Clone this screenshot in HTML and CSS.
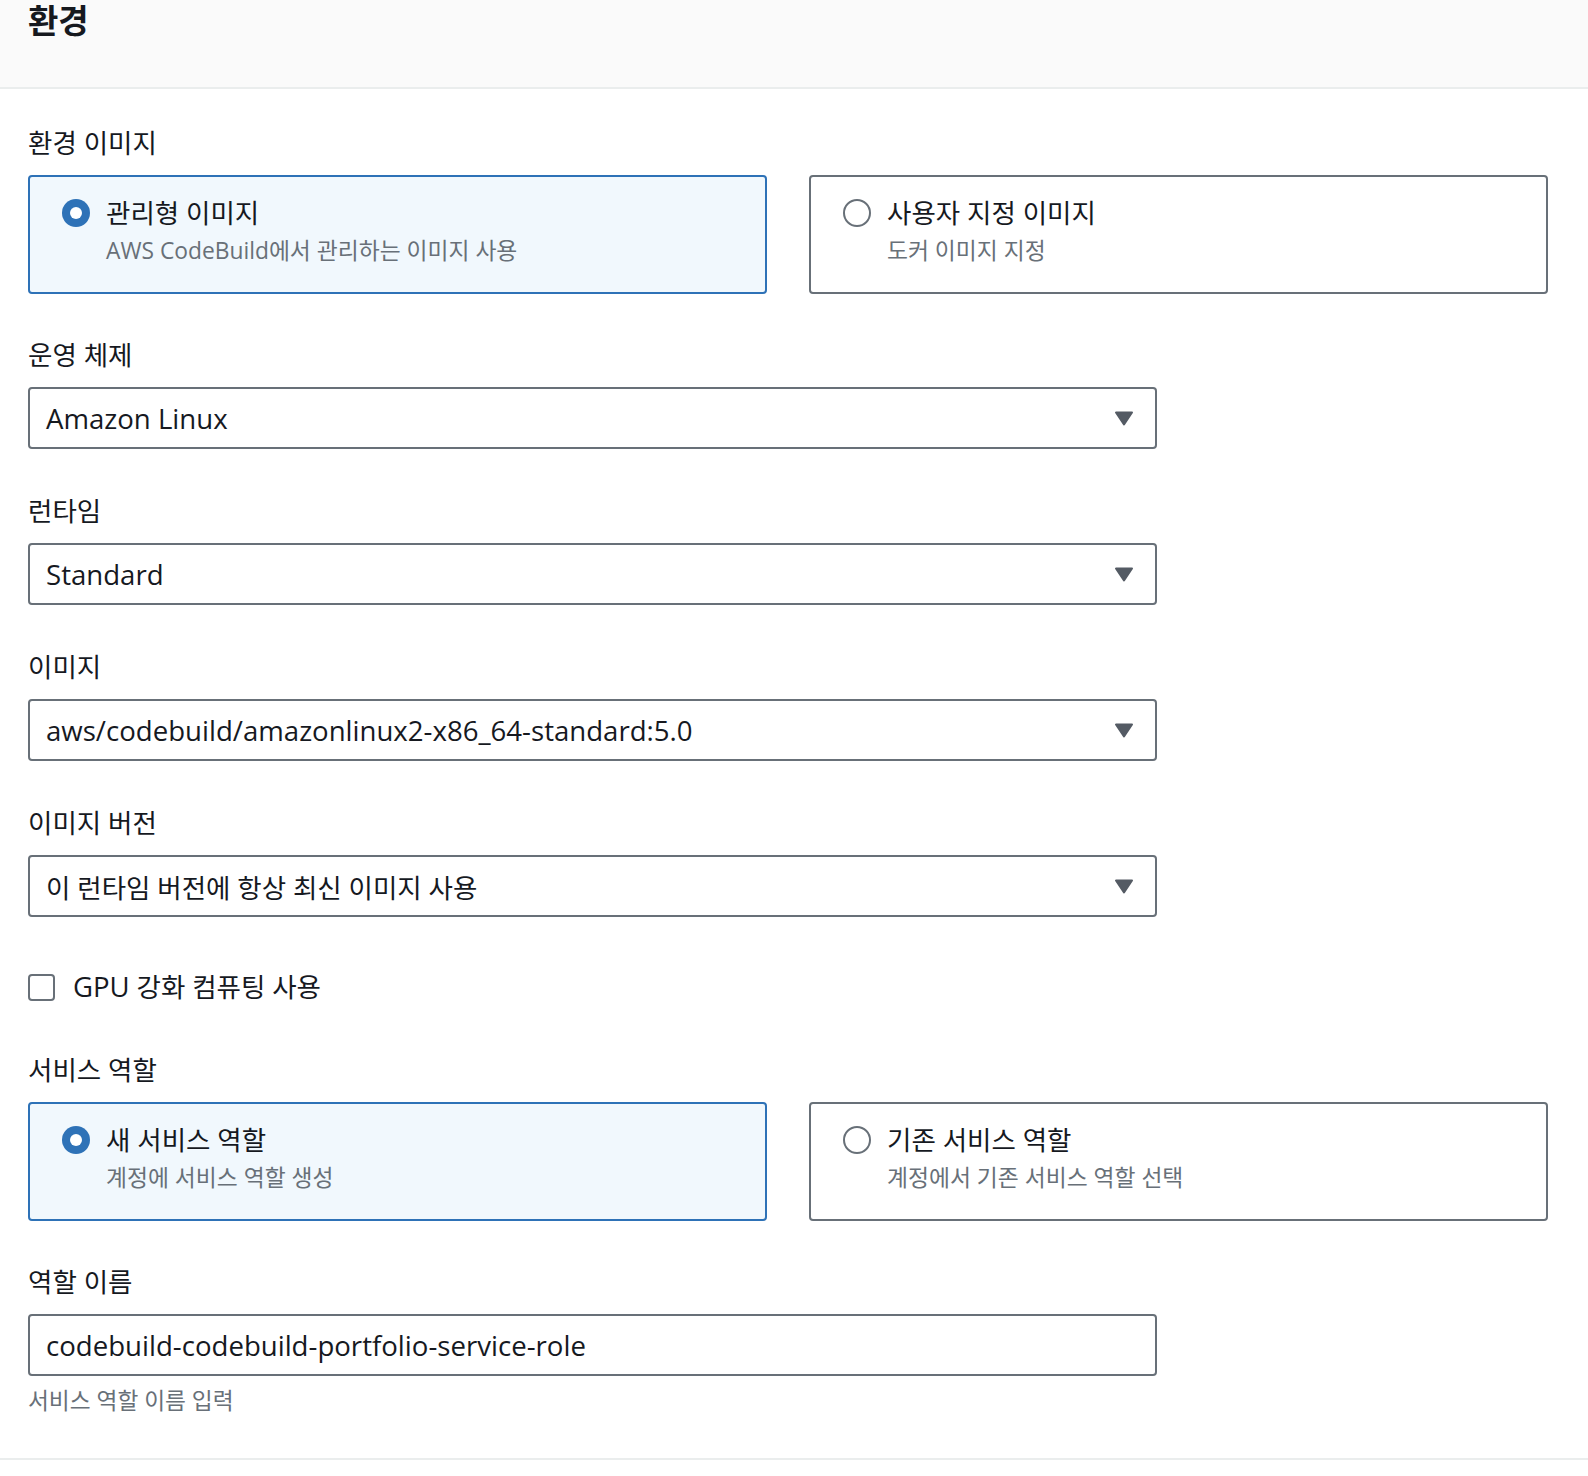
FILE: index.html
```html
<!DOCTYPE html>
<html lang="ko">
<head>
<meta charset="utf-8">
<title>환경</title>
<link rel="stylesheet" href="styles.css">
</head>
<body>
<section class="panel">
  <header class="panel-header">
    <h2 class="title">환경</h2>
  </header>
  <div class="panel-body">
    <div class="field first">
      <div class="label">환경 이미지</div>
      <div class="tiles">
        <div class="tile selected">
          <span class="radio checked"></span>
          <div class="tile-text">
            <div class="tile-label">관리형 이미지</div>
            <div class="tile-desc"><span class="en">AWS CodeBuild</span>에서 관리하는 이미지 사용</div>
          </div>
        </div>
        <div class="tile">
          <span class="radio"></span>
          <div class="tile-text">
            <div class="tile-label">사용자 지정 이미지</div>
            <div class="tile-desc">도커 이미지 지정</div>
          </div>
        </div>
      </div>
    </div>

    <div class="field after-tiles">
      <div class="label">운영 체제</div>
      <div class="select">
        <span class="value en">Amazon Linux</span>
        <svg class="caret" viewBox="0 0 20 15" width="20" height="15"><path d="M2 1.5 H18 L10 13.5 Z"/></svg>
      </div>
    </div>

    <div class="field">
      <div class="label">런타임</div>
      <div class="select">
        <span class="value en">Standard</span>
        <svg class="caret" viewBox="0 0 20 15" width="20" height="15"><path d="M2 1.5 H18 L10 13.5 Z"/></svg>
      </div>
    </div>

    <div class="field">
      <div class="label">이미지</div>
      <div class="select">
        <span class="value en">aws/codebuild/amazonlinux2-x86_64-standard:5.0</span>
        <svg class="caret" viewBox="0 0 20 15" width="20" height="15"><path d="M2 1.5 H18 L10 13.5 Z"/></svg>
      </div>
    </div>

    <div class="field">
      <div class="label">이미지 버전</div>
      <div class="select">
        <span class="value">이 런타임 버전에 항상 최신 이미지 사용</span>
        <svg class="caret" viewBox="0 0 20 15" width="20" height="15"><path d="M2 1.5 H18 L10 13.5 Z"/></svg>
      </div>
    </div>

    <label class="checkbox-row">
      <span class="checkbox"></span>
      <span class="checkbox-label"><span class="en">GPU</span> 강화 컴퓨팅 사용</span>
    </label>

    <div class="field after-checkbox">
      <div class="label">서비스 역할</div>
      <div class="tiles">
        <div class="tile selected">
          <span class="radio checked"></span>
          <div class="tile-text">
            <div class="tile-label">새 서비스 역할</div>
            <div class="tile-desc">계정에 서비스 역할 생성</div>
          </div>
        </div>
        <div class="tile">
          <span class="radio"></span>
          <div class="tile-text">
            <div class="tile-label">기존 서비스 역할</div>
            <div class="tile-desc">계정에서 기존 서비스 역할 선택</div>
          </div>
        </div>
      </div>
    </div>

    <div class="field after-tiles">
      <div class="label">역할 이름</div>
      <div class="input">
        <span class="value en">codebuild-codebuild-portfolio-service-role</span>
      </div>
      <div class="hint">서비스 역할 이름 입력</div>
    </div>
  </div>
</section>
</body>
</html>
```

FILE: styles.css
```css
html, body {
  margin: 0;
  padding: 0;
  background: #ffffff;
}

body {
  font-family: "Open Sans", "Noto Sans CJK KR", sans-serif;
  color: #16191f;
  font-size: 26.5px;
}

.panel-header {
  height: 87px;
  background: #fafafa;
  border-bottom: 2px solid #eaeded;
  padding-left: 28px;
}

.title {
  margin: 0;
  font-size: 33px;
  line-height: 42px;
  font-weight: 700;
}

.panel-body {
  padding: 0 40px 44px 28px;
  border-bottom: 2px solid #eaeded;
}

.en {
  font-size: 1.04em;
}

.field {
  margin-top: 47px;
}

.field.first {
  margin-top: 39px;
}

.field.after-tiles {
  margin-top: 46px;
}

.field.after-checkbox {
  margin-top: 53px;
}

.label {
  font-size: 26.5px;
  line-height: 30px;
  margin-bottom: 17px;
}

.tiles {
  display: grid;
  grid-template-columns: 739px 739px;
  column-gap: 42px;
}

.tile {
  display: flex;
  align-items: flex-start;
  gap: 16px;
  box-sizing: border-box;
  height: 119px;
  padding: 19px 24px 0 32px;
  border: 2px solid #687078;
  border-radius: 4px;
  background: #ffffff;
}

.tile.selected {
  border-color: #2e72b7;
  background: #f1f8fd;
}

.radio {
  flex: none;
  box-sizing: border-box;
  width: 28px;
  height: 28px;
  margin-top: 3px;
  border: 2px solid #687078;
  border-radius: 50%;
  background: #ffffff;
  position: relative;
}

.radio.checked {
  border: none;
  background: #2e72b7;
}

.radio.checked::after {
  content: "";
  position: absolute;
  left: 8px;
  top: 8px;
  width: 12px;
  height: 12px;
  border-radius: 50%;
  background: #ffffff;
}

.tile-label {
  font-size: 26.5px;
  line-height: 34px;
}

.tile-desc {
  margin-top: 6px;
  font-size: 22.8px;
  line-height: 30px;
  color: #687078;
}

.tile-desc .en {
  font-size: 1em;
}

.select,
.input {
  display: flex;
  align-items: center;
  justify-content: space-between;
  box-sizing: border-box;
  width: 1129px;
  height: 62px;
  padding: 0 21px 0 16px;
  border: 2px solid #687078;
  border-radius: 4px;
  background: #ffffff;
}

.value {
  font-size: 26.5px;
  white-space: nowrap;
}

.value.en {
  font-size: 27.6px;
}

.caret {
  flex: none;
  fill: #545b64;
  stroke: #545b64;
  stroke-width: 2;
  stroke-linejoin: round;
}

.checkbox-row {
  display: flex;
  align-items: center;
  gap: 18px;
  height: 30px;
  margin-top: 55px;
}

.checkbox {
  flex: none;
  box-sizing: border-box;
  width: 27px;
  height: 27px;
  border: 2px solid #687078;
  border-radius: 4px;
  background: #ffffff;
}

.checkbox-label {
  font-size: 26.5px;
  line-height: 30px;
}

.hint {
  margin-top: 12px;
  font-size: 22.7px;
  line-height: 26px;
  color: #687078;
}
```
